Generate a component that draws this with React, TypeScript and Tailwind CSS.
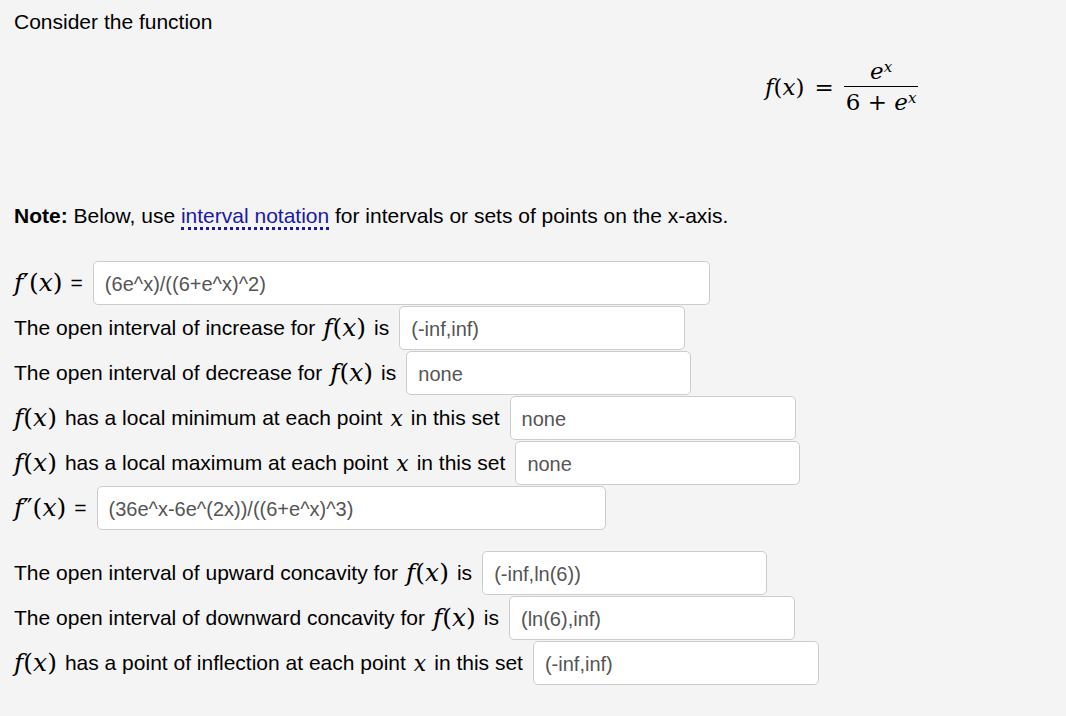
import React from 'react';

const serif = "font-['DejaVu_Serif','Liberation_Serif',serif]";

const F: React.FC<{ prime?: string }> = ({ prime }) => (
    <span className={`${serif} text-[25px] whitespace-nowrap`}>
        <i>f</i>
        {prime && <span>{prime}</span>}
        <span>(</span>
        <i>x</i>
        <span>)</span>
    </span>
);

const X = () => <i className={`${serif} text-[22px]`}>x</i>;

const Answer: React.FC<{ value: string; width: string }> = ({ value, width }) => (
    <input
        readOnly
        value={value}
        className={`${width} h-[44px] shrink-0 rounded-[5px] border border-[#ccc] bg-white px-[11px] pt-[2px] text-[20px] text-[#555] outline-none`}
    />
);

const Row: React.FC<{ children: React.ReactNode }> = ({ children }) => (
    <div className="flex items-center gap-[10px]">{children}</div>
);

export default function App() {
    return (
        <div className="min-h-screen bg-[#f4f4f4] px-[14px] pt-[10px] font-['Liberation_Sans',Arial,sans-serif] text-[21px] text-black">
            <p className="leading-[24px]">Consider the function</p>

            {/* display formula */}
            <div className={`${serif} mt-[24px] flex items-center pl-[751px] text-[23px]`}>
                <span>
                    <i>f</i>(<i>x</i>)
                </span>
                <span className="mx-[10px]">=</span>
                <span className="inline-flex flex-col items-center">
                    <span className="px-[6px] leading-[26px]">
                        <i>e</i>
                        <sup className="text-[15px]">
                            <i>x</i>
                        </sup>
                    </span>
                    <span className="mt-[2px] h-[1px] w-full bg-black" />
                    <span className="px-[2px] leading-[30px]">
                        6 + <i>e</i>
                        <sup className="text-[15px]">
                            <i>x</i>
                        </sup>
                    </span>
                </span>
            </div>

            <p className="mt-[87px] leading-[24px]">
                <b>Note:</b> Below, use{' '}
                <span className="border-b-[3px] border-dotted border-[#1a1aa6] text-[#1a1aa6]">interval notation</span> for
                intervals or sets of points on the x-axis.
            </p>

            <div className="mt-[33px] flex flex-col gap-[1px]">
                <Row>
                    <span className="flex items-center gap-[8px]">
                        <F prime="′" />
                        <span>=</span>
                    </span>
                    <Answer value="(6e^x)/((6+e^x)^2)" width="w-[617px]" />
                </Row>
                <Row>
                    <span className="flex items-center gap-[8px]">
                        The open interval of increase for <F /> is
                    </span>
                    <Answer value="(-inf,inf)" width="w-[286px]" />
                </Row>
                <Row>
                    <span className="flex items-center gap-[8px]">
                        The open interval of decrease for <F /> is
                    </span>
                    <Answer value="none" width="w-[285px]" />
                </Row>
                <Row>
                    <span className="flex items-center gap-[8px]">
                        <F /> has a local minimum at each point <X /> in this set
                    </span>
                    <Answer value="none" width="w-[286px]" />
                </Row>
                <Row>
                    <span className="flex items-center gap-[8px]">
                        <F /> has a local maximum at each point <X /> in this set
                    </span>
                    <Answer value="none" width="w-[285px]" />
                </Row>
                <Row>
                    <span className="flex items-center gap-[8px]">
                        <F prime="″" />
                        <span>=</span>
                    </span>
                    <Answer value="(36e^x-6e^(2x))/((6+e^x)^3)" width="w-[509px]" />
                </Row>
            </div>

            <div className="mt-[21px] flex flex-col gap-[1px]">
                <Row>
                    <span className="flex items-center gap-[8px]">
                        The open interval of upward concavity for <F /> is
                    </span>
                    <Answer value="(-inf,ln(6))" width="w-[285px]" />
                </Row>
                <Row>
                    <span className="flex items-center gap-[8px]">
                        The open interval of downward concavity for <F /> is
                    </span>
                    <Answer value="(ln(6),inf)" width="w-[286px]" />
                </Row>
                <Row>
                    <span className="flex items-center gap-[8px]">
                        <F /> has a point of inflection at each point <X /> in this set
                    </span>
                    <Answer value="(-inf,inf)" width="w-[286px]" />
                </Row>
            </div>
        </div>
    );
}
